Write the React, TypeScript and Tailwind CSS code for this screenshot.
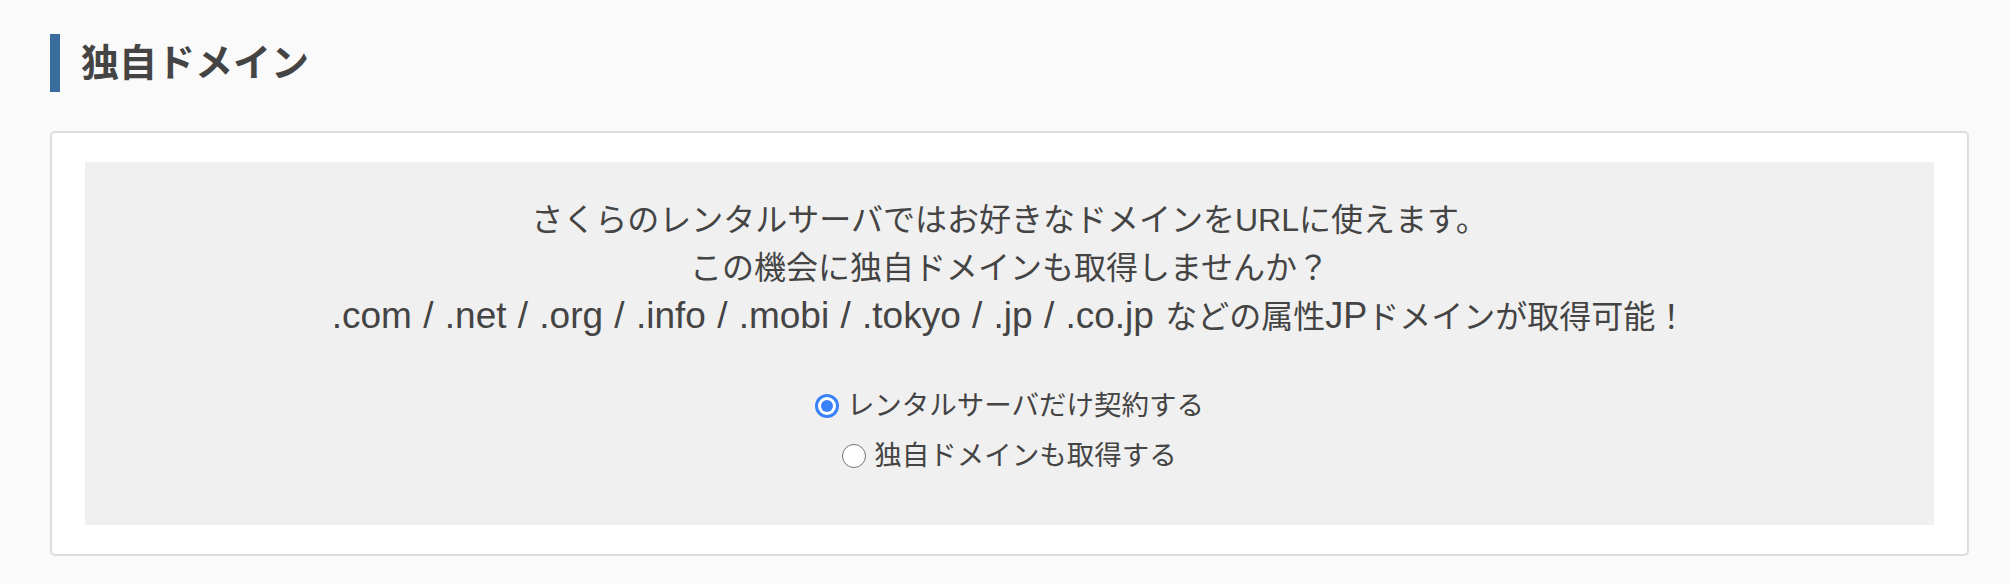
import React from "react";

function Radio({ checked }: { checked: boolean }) {
  if (checked) {
    return (
      <span className="flex h-[24px] w-[24px] shrink-0 items-center justify-center rounded-full bg-[#3a82f7]">
        <span className="flex h-[18px] w-[18px] items-center justify-center rounded-full bg-white">
          <span className="h-[12px] w-[12px] rounded-full bg-[#3a82f7]" />
        </span>
      </span>
    );
  }
  return <span className="h-[24px] w-[24px] shrink-0 rounded-full border-[1.5px] border-[#767676] bg-white" />;
}

export default function App() {
  return (
    <div
      className="min-h-screen bg-[#fafafa] pl-[50px] pr-[41px] pt-[34px] pb-[29px]"
      style={{ fontFamily: '"Liberation Sans", "Noto Sans CJK JP", sans-serif' }}
    >
      <h2 className="flex h-[58px] items-center border-l-[10px] border-[#3a6d9e] pl-[21px] text-[38px] font-bold text-[#444]">
        独自ドメイン
      </h2>
      <div className="mt-[39px] rounded-[5px] border-2 border-[#dddddd] bg-white px-[33px] py-[29px]">
        <div className="bg-[#f0f0f0] pt-[34px] pb-[44px] text-center text-[32px] leading-[48px] text-[#444]">
          <p>さくらのレンタルサーバではお好きなドメインをURLに使えます。</p>
          <p>この機会に独自ドメインも取得しませんか？</p>
          <p>
            <span className="text-[37px] [word-spacing:1px]">.com / .net / .org / .info / .mobi / .tokyo / .jp / .co.jp </span>
            などの属性<span className="text-[36px]">JP</span>ドメインが取得可能！
          </p>
          <div className="mt-[40px] flex flex-col items-center text-[27.5px] leading-[50px]">
            <label className="flex items-center gap-[8px]">
              <Radio checked={true} />
              <span>レンタルサーバだけ契約する</span>
            </label>
            <label className="flex items-center gap-[8px]">
              <Radio checked={false} />
              <span>独自ドメインも取得する</span>
            </label>
          </div>
        </div>
      </div>
    </div>
  );
}
